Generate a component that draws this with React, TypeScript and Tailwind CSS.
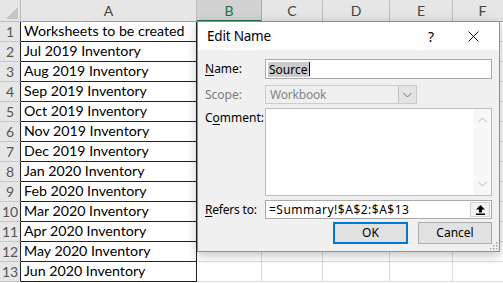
import React from "react";

const rows = [
  "Worksheets to be created",
  "Jul 2019 Inventory",
  "Aug 2019 Inventory",
  "Sep 2019 Inventory",
  "Oct 2019 Inventory",
  "Nov 2019 Inventory",
  "Dec 2019 Inventory",
  "Jan 2020 Inventory",
  "Feb 2020 Inventory",
  "Mar 2020 Inventory",
  "Apr 2020 Inventory",
  "May 2020 Inventory",
  "Jun 2020 Inventory",
];

const otherCols = ["B", "C", "D", "E", "F"];

function Chevron({ up = false, color = "#606060" }: { up?: boolean; color?: string }) {
  return (
    <svg width="9" height="6" viewBox="0 0 9 6">
      <polyline
        points={up ? "0.5,5 4.5,1 8.5,5" : "0.5,1 4.5,5 8.5,1"}
        fill="none"
        stroke={color}
        strokeWidth="1"
      />
    </svg>
  );
}

export default function App() {
  return (
    <div className="relative w-[503px] h-[283px] overflow-hidden bg-white font-['Lato',sans-serif]">
      <div className="grid grid-cols-[21px_176px_65px_61px_67px_63px_60px] grid-rows-[22px_repeat(13,20px)]">
        {/* header row */}
        <div className="relative bg-[#e6e6e6] border-r border-b border-[#bdbdbd]">
          <svg className="absolute right-[2px] bottom-[2px]" width="12" height="12" viewBox="0 0 12 12">
            <polygon points="12,0 12,12 0,12" fill="#c4c4c4" />
          </svg>
        </div>
        <div className="bg-[#e6e6e6] border-r border-b border-r-[#bdbdbd] border-b-[#9e9e9e] flex items-center justify-center text-[14px] text-[#444]">
          A
        </div>
        {otherCols.map((c) =>
          c === "B" ? (
            <div
              key={c}
              className="bg-[#d2d2d2] border-r border-r-[#ababab] border-b-2 border-b-[#217346] flex items-center justify-center text-[14px] text-[#217346]"
            >
              {c}
            </div>
          ) : (
            <div
              key={c}
              className="bg-[#e6e6e6] border-r border-b border-r-[#bdbdbd] border-b-[#9e9e9e] flex items-center justify-center text-[14px] text-[#444]"
            >
              {c}
            </div>
          )
        )}
        {rows.map((r, i) => (
          <React.Fragment key={i}>
            <div className="bg-[#e6e6e6] border-b border-b-[#c6c6c6] border-r border-r-[#222] flex items-center justify-center text-[14px] text-[#555]">
              {i + 1}
            </div>
            <div className="border-r border-b border-[#222] flex items-center pl-[3px] text-[14.2px] text-black whitespace-nowrap leading-none">
              {r}
            </div>
            {otherCols.map((c) => (
              <div key={c} className="border-r border-b border-[#dadada]" />
            ))}
          </React.Fragment>
        ))}
      </div>

      {/* Dialog */}
      <div className="absolute left-[197px] top-[21px] w-[303px] h-[231px] border border-[#8f8f8f] bg-[#f0f0f0] shadow-[0_3px_10px_rgba(0,0,0,0.25)] flex flex-col font-['Noto_Sans',sans-serif] text-[12px] text-black">
        <div className="h-[28px] bg-white flex items-center pl-[9px]">
          <span className="text-[13.5px] tracking-[-0.2px]">Edit Name</span>
          <span className="ml-auto text-[14px] mr-[34px]">?</span>
          <svg className="mr-[20px]" width="11" height="11" viewBox="0 0 11 11">
            <line x1="0.5" y1="0.5" x2="10.5" y2="10.5" stroke="#111" strokeWidth="1" />
            <line x1="10.5" y1="0.5" x2="0.5" y2="10.5" stroke="#111" strokeWidth="1" />
          </svg>
        </div>
        <div className="relative flex-1 flex flex-col px-[7px] pt-[9px]">
          {/* Name */}
          <div className="flex items-center">
            <div className="w-[60px]">
              <span className="underline underline-offset-2">N</span>ame:
            </div>
            <div className="w-[227px] h-[20px] bg-white border border-[#a9a9a9] flex items-center pl-[2px]">
              <span className="bg-[#cccccc] px-[1px] leading-[15px]">Source</span>
              <span className="w-[1px] h-[14px] bg-black" />
            </div>
          </div>
          {/* Scope */}
          <div className="flex items-center mt-[6px]">
            <div className="w-[60px] text-[#7a7a7a]">Scope:</div>
            <div className="w-[152px] h-[19px] bg-[#efefef] border border-[#cccccc] flex items-center">
              <span className="pl-[4px] text-[#858585] flex-1 tracking-[-0.2px]">Workbook</span>
              <div className="w-[18px] h-full bg-[#e3e3e3] border-l border-[#c2c2c2] flex items-center justify-center">
                <Chevron color="#707070" />
              </div>
            </div>
          </div>
          {/* Comment */}
          <div className="flex items-start mt-[4px]">
            <div className="w-[60px] pt-[1px]">
              C<span className="underline underline-offset-2">o</span>mment:
            </div>
            <div className="w-[227px] h-[88px] bg-white border border-[#bcbcbc] flex justify-end">
              <div className="w-[17px] h-full bg-[#f7f7f7] flex flex-col items-center justify-between py-[8px]">
                <Chevron up color="#b5b5b5" />
                <Chevron color="#b5b5b5" />
              </div>
            </div>
          </div>
          {/* Refers to */}
          <div className="flex items-center mt-[4px]">
            <div className="w-[60px] tracking-[-0.2px]">
              <span className="underline underline-offset-2">R</span>efers to:
            </div>
            <div className="w-[227px] h-[19px] bg-white border border-[#a9a9a9] flex items-center">
              <span className="pl-[3px] flex-1 tracking-[0.5px]">=Summary!$A$2:$A$13</span>
              <div className="w-[20px] h-[15px] mr-[1px] bg-[#f2f2f2] border border-[#d0d0d0] flex items-center justify-center">
                <svg width="9" height="10" viewBox="0 0 9 10">
                  <polygon points="4.5,0 9,4.5 6,4.5 6,7.5 3,7.5 3,4.5 0,4.5" fill="#000" />
                  <rect x="0" y="8.5" width="9" height="1.5" fill="#000" />
                </svg>
              </div>
            </div>
          </div>
          {/* Buttons */}
          <div className="flex mt-[3px] pl-[128px] gap-[10px]">
            <div className="w-[75px] h-[22px] bg-[#e1e1e1] border-2 border-[#0078d7] flex items-center justify-center">
              OK
            </div>
            <div className="w-[74px] h-[22px] bg-[#e1e1e1] border border-[#adadad] flex items-center justify-center">
              Cancel
            </div>
          </div>
          {/* resize grip */}
          <svg className="absolute right-[1px] bottom-[1px]" width="10" height="10" viewBox="0 0 10 10">
            <rect x="8" y="2" width="1.5" height="1.5" fill="#a8a8a8" />
            <rect x="5" y="5" width="1.5" height="1.5" fill="#a8a8a8" />
            <rect x="8" y="5" width="1.5" height="1.5" fill="#a8a8a8" />
            <rect x="2" y="8" width="1.5" height="1.5" fill="#a8a8a8" />
            <rect x="5" y="8" width="1.5" height="1.5" fill="#a8a8a8" />
            <rect x="8" y="8" width="1.5" height="1.5" fill="#a8a8a8" />
          </svg>
        </div>
      </div>
    </div>
  );
}
